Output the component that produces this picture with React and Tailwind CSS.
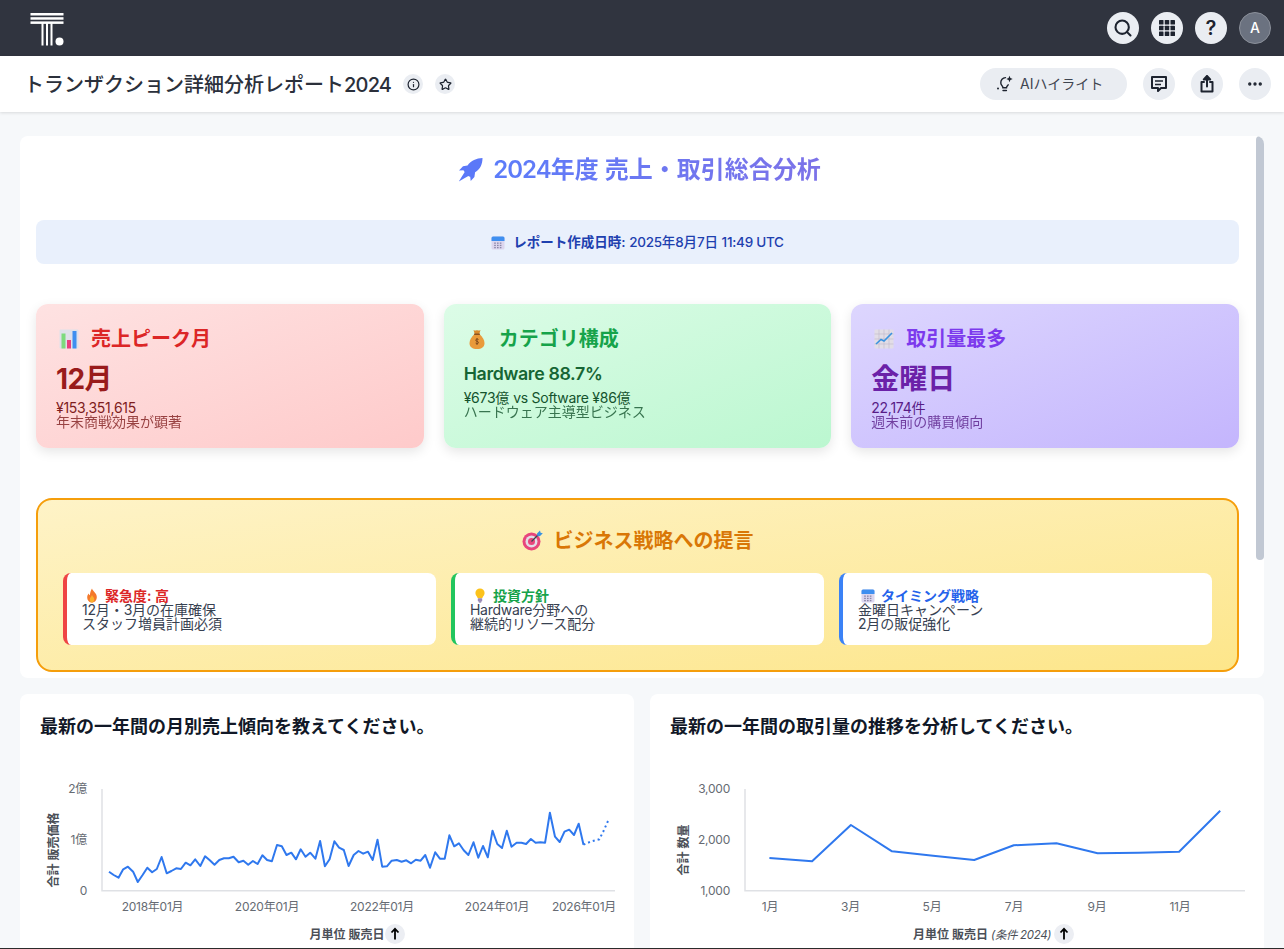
import React from "react";
import { Search, Info, Star, Ellipsis } from "lucide-react";

const L = [[225,305],[237,315],[249,323],[261,298],[273,290],[286,305],[298,336],[310,315],[322,293],[334,307],[346,297],[358,261],[371,310],[383,303],[395,295],[407,297],[419,278],[431,286],[443,268],[456,288],[468,259],[480,271],[492,284],[504,270],[516,265],[528,265],[540,260],[553,277],[565,272],[577,284],[589,273],[601,282],[613,256],[625,270],[637,274],[650,225],[662,229],[674,255],[686,248],[698,268],[710,238],[722,260],[734,248],[747,266],[759,213],[771,289],[783,268],[795,214],[807,233],[819,240],[831,288],[844,255],[856,243],[868,251],[880,245],[892,270],[904,209],[916,290],[928,289],[940,272],[953,270],[965,275],[977,271],[989,280],[1001,269],[1013,272],[1025,255],[1037,293],[1050,247],[1062,266],[1074,266],[1086,196],[1098,229],[1110,220],[1122,241],[1134,255],[1147,217],[1159,263],[1171,228],[1183,262],[1195,182],[1207,222],[1219,234],[1231,182],[1243,230],[1256,218],[1268,218],[1280,222],[1292,207],[1304,218],[1316,217],[1328,218],[1340,128],[1353,200],[1365,216],[1377,185],[1389,179],[1401,195],[1413,161],[1425,224]];
const LD = [[1425,224],[1445,214],[1465,208],[1475,185],[1487,153]];
const R = [[302,264],[410,274],[508,165],[612,244],[716,257],[820,270],[920,226],[1028,220],[1132,250],[1236,248],[1338,245],[1442,122]];
const pts = (a) => a.map(([x, y]) => `${(x / 2.529).toFixed(1)},${(y / 3).toFixed(1)}`).join(" ");

// Latin runs are set slightly tighter than the CJK runs around them.
const Tx = ({ children, wide = false }) =>
  String(children)
    .split(/([\x21-\x7e¥]+(?: [\x21-\x7e¥]+)*)/)
    .map((run, i) =>
      i % 2 ? (
        <span key={i} className={wide ? "tracking-[-0.04em]" : "tracking-[-0.02em]"}>{run}</span>
      ) : (
        run
      )
    );

const IconBtn = ({ children, cls = "" }) => (
  <div className={`w-8 h-8 rounded-full bg-[#eaedf2] flex items-center justify-center text-[#1d232f] ${cls}`}>{children}</div>
);

const Logo = () => (
  <svg width="34" height="34" viewBox="0 0 34 34" fill="#fff" className="mt-[3px]">
    <rect x="0.5" y="0" width="33" height="2.5" />
    <rect x="0.5" y="4.2" width="33" height="2.5" />
    <rect x="0.5" y="8.4" width="33" height="2.5" />
    <rect x="11.5" y="10" width="2" height="22.500" />
    <rect x="16" y="10" width="2" height="22.500" />
    <rect x="20.5" y="10" width="2" height="22.500" />
    <circle cx="29.5" cy="28.500" r="4" />
  </svg>
);

const GridIcon = () => (
  <svg width="16" height="16" viewBox="0 0 16 16" fill="#1d232f">
    {[0, 5.75, 11.5].map((y) => [0, 5.75, 11.5].map((x) => <rect key={x + "-" + y} x={x} y={y} width="4.500" height="4.500" rx=".6" />))}
  </svg>
);

const AiIcon = () => (
  <svg width="18" height="18" viewBox="0 0 18 18" fill="none" stroke="#1d232f" strokeWidth="1.4" strokeLinecap="round">
    <path d="M9.500 2.600A5 5 0 0 0 4.800 8c0 1.600 1.200 2.500 1.800 3.600.2.400.3.800.3 1.200h3.600c0-1.300 1-2 1.700-3" />
    <path d="M7 15.500h3.400" />
    <path d="M13.500 0.800l.9 2.300 2.300.9-2.300.9-.9 2.300-.9-2.300-2.300-.9 2.300-.9z" fill="#1d232f" stroke="none" />
    <circle cx="2" cy="13.500" r="1" fill="#1d232f" stroke="none" />
  </svg>
);

const CommentIcon = () => (
  <svg width="18" height="18" viewBox="0 0 18 18" fill="none" stroke="#1d232f" strokeWidth="2" strokeLinejoin="round">
    <path d="M2 2h14v11h-5l-3 3v-3H2z" />
    <path d="M5 6h8M5 9.500h6" strokeWidth="1.700" />
  </svg>
);

const ShareIcon = () => (
  <svg width="18" height="18" viewBox="0 0 18 18" fill="none" stroke="#1d232f" strokeWidth="2" strokeLinecap="round" strokeLinejoin="round">
    <path d="M6 7H3.500v9.500h11V7H12" />
    <path d="M9 11.500V1.500" />
    <path d="M9 1L5.800 4.500h6.400z" fill="#1d232f" />
  </svg>
);

const Rocket = () => (
  <svg width="25" height="24" viewBox="0 0 25 24" fill="#5b78f8">
    <path d="M24.500 0C18.500.2 13 2.500 9.500 7.500L5 8.300 1 12.500l4.500-.3c.3.800.7 1.400 1.200 1.900L0.800 23.500l9.500-5.600c.6.400 1.200.7 1.900.9l.5 4.200 3.700-4 .7-4.700C22.500 11 24.500 6 24.500 0z" />
  </svg>
);

const Calendar = ({ s = 14 }) => (
  <svg width={s} height={s} viewBox="0 0 14 14">
    <rect x="0.500" y="0.500" width="13" height="13" rx="1.500" fill="#dcd6ee" />
    <path d="M0.500 5V2a1.500 1.500 0 0 1 1.500-1.500h10A1.500 1.500 0 0 1 13.500 2v3z" fill="#3f8ff0" />
    {[3.2, 6, 8.800].map((x) => [6.5, 8.8, 11].map((y) => <rect key={x + "-" + y} x={x} y={y} width="1.600" height="1.300" fill="#8b86a8" />))}
  </svg>
);

const BarChart = () => (
  <svg width="20" height="20" viewBox="0 0 20 20">
    <rect x="0.500" y="0.500" width="19" height="19" rx="1" fill="#dfe1ea" />
    <rect x="2.500" y="4.500" width="4" height="15" fill="#7ddb7e" />
    <rect x="8" y="11" width="4" height="8.500" fill="#ea3f7e" />
    <rect x="13.500" y="2" width="4" height="17.500" fill="#3f8ff0" />
  </svg>
);

const MoneyBag = () => (
  <svg width="20" height="20" viewBox="0 0 20 20">
    <path d="M7.500 5C4.500 8 2.500 11 2.500 14c0 4 3 6 7.500 6s7.500-2 7.500-6c0-3-2-6-5-9z" fill="#e99a3a" />
    <path d="M6.500 1c1.500.8 2.500.8 3.500 0 1 .8 2 .8 3.500 0L12.300 5H7.700z" fill="#d98a2c" />
    <rect x="7" y="4.500" width="6" height="1.400" rx=".7" fill="#8a5220" />
    <path d="M11.500 10.500c-.4-.6-2.800-.8-2.800.7 0 1.500 2.800.8 2.800 2.300 0 1.500-2.400 1.300-2.900.6M10 9v7" fill="none" stroke="#7a4518" strokeWidth=".9" />
  </svg>
);

const LineUp = () => (
  <svg width="20" height="20" viewBox="0 0 20 20">
    <rect x="0.500" y="0.500" width="19" height="19" rx="1" fill="#e2dde6" />
    <path d="M5 .5v19M10 .5v19M15 .5v19M.5 5h19M.5 10h19M.5 15h19" stroke="#c3bccd" strokeWidth=".7" />
    <path d="M2 15l5-4.500 3 1.500 8-8" fill="none" stroke="#3a93e0" strokeWidth="1.600" />
  </svg>
);

const Target = () => (
  <svg width="21" height="21" viewBox="0 0 21 21">
    <circle cx="9.500" cy="11.500" r="9" fill="#e8467c" />
    <circle cx="9.500" cy="11.500" r="6" fill="#e3dde6" />
    <circle cx="9.500" cy="11.500" r="3.500" fill="#e8467c" />
    <path d="M9.500 11.500L17 4" stroke="#37474f" strokeWidth="1.300" />
    <path d="M15 3.500l3-3 .6 2.200 2.200.6-3 3-2.400-.4z" fill="#3a93e0" />
  </svg>
);

const Fire = () => (
  <svg width="14" height="15" viewBox="0 0 14 14">
    <path d="M7 0c.5 2.500 4.800 4.500 4.800 8.500C11.800 11.800 9.700 14 7 14S2.200 11.800 2.200 8.700c0-1.700.8-3 1.600-3.800.1 1 .5 1.600 1.100 1.900C5 4.500 5.800 2 7 0z" fill="#f4792b" />
    <path d="M7 6.500c.4 1.300 2.300 2.300 2.300 4.500 0 1.500-1 3-2.300 3s-2.300-1.300-2.300-2.800c0-1.900 1.700-2.800 2.300-4.700z" fill="#fbb02d" />
  </svg>
);

const Bulb = () => (
  <svg width="14" height="15" viewBox="0 0 14 14">
    <path d="M7 0a4.600 4.600 0 0 0-4.600 4.600c0 2.200 1.700 3.200 2.300 5.200h4.600c.6-2 2.300-3 2.300-5.200A4.600 4.600 0 0 0 7 0z" fill="#fcc21b" />
    <rect x="4.800" y="9.800" width="4.400" height="3.200" rx=".8" fill="#9b8bb8" />
    <rect x="5.800" y="13" width="2.400" height="1" fill="#6f6090" />
  </svg>
);

const Kpi = ({ bg, icon, title, tc, value, vc, vcls, l1, l2, sc }) => (
  <div className={`h-36 rounded-xl p-5 shadow-[0_4px_12px_rgba(0,0,0,0.1)] ${bg}`}>
    <div className={`flex items-center gap-[12px] h-[30px] pl-[3px] text-[20px] leading-[30px] font-semibold ${tc}`}>
      {icon}
      <span>{title}</span>
    </div>
    <div className={`mt-[3px] ${vcls} ${vc}`}><Tx>{value}</Tx></div>
    <div className={`text-sm leading-[14px] ${sc}`}>
      <div><Tx>{l1}</Tx></div>
      <div className="opacity-80">{l2}</div>
    </div>
  </div>
);

const Tip = ({ border, icon, title, tc, l1, l2 }) => (
  <div className={`h-[72px] bg-white rounded-lg border-l-4 p-[15px] text-sm leading-[14px] text-[#374151] ${border}`}>
    <div className={`flex items-center gap-[6px] pl-[3px] h-[15px] font-semibold ${tc}`}>
      {icon}
      <span>{title}</span>
    </div>
    <div><Tx>{l1}</Tx></div>
    <div><Tx>{l2}</Tx></div>
  </div>
);

const axis = { fill: "#666b73", fontSize: 12, letterSpacing: "-0.02em", dominantBaseline: "central" };
const bold = { fill: "#4b4f57", fontSize: 12, fontWeight: 600, dominantBaseline: "central" };

const SortBadge = ({ x }) => (
  <g>
    <circle cx={x} cy="164" r="10" fill="#eceef3" />
    <path d={`M${x} 169.500V159M${x - 3.500} 162.500L${x} 158.800L${x + 3.500} 162.500`} fill="none" stroke="#000" strokeWidth="1.800" />
  </g>
);

const ChartLeft = () => (
  <svg width="614" height="179" className="block">
    <path d="M82 19V120.700H595" fill="none" stroke="#dfe1e5" strokeWidth="1.500" />
    <text x="67" y="18.500" textAnchor="end" {...axis}>2億</text>
    <text x="67" y="69.500" textAnchor="end" {...axis}>1億</text>
    <text x="67" y="120.200" textAnchor="end" {...axis}>0</text>
    {[["2018年01月", 132.5], ["2020年01月", 247], ["2022年01月", 362], ["2024年01月", 477], ["2026年01月", 564]].map(([t, x]) => (
      <text key={t} x={x} y="136.500" textAnchor="middle" {...axis}>{t}</text>
    ))}
    <text transform="translate(33.500 80) rotate(-90)" textAnchor="middle" {...bold}>合計 販売価格</text>
    <polyline points={pts(L)} fill="none" stroke="#2f78ee" strokeWidth="2" strokeLinejoin="round" />
    <polyline points={pts(LD)} fill="none" stroke="#2f78ee" strokeWidth="2" strokeDasharray="2 3" />
    <text x="327" y="164.500" textAnchor="middle" {...bold}>月単位 販売日</text>
    <SortBadge x={375} />
  </svg>
);

const ChartRight = () => (
  <svg width="614" height="179" className="block">
    <path d="M95 19V120.700H595" fill="none" stroke="#dfe1e5" strokeWidth="1.500" />
    <text x="80" y="18.500" textAnchor="end" {...axis}>3,000</text>
    <text x="80" y="69.500" textAnchor="end" {...axis}>2,000</text>
    <text x="80" y="120.200" textAnchor="end" {...axis}>1,000</text>
    {[["1月", 120], ["3月", 200.5], ["5月", 282], ["7月", 364], ["9月", 447], ["11月", 530]].map(([t, x]) => (
      <text key={t} x={x} y="136.500" textAnchor="middle" {...axis}>{t}</text>
    ))}
    <text transform="translate(33.500 80) rotate(-90)" textAnchor="middle" {...bold}>合計 数量</text>
    <polyline points={pts(R)} fill="none" stroke="#2f78ee" strokeWidth="2" strokeLinejoin="round" />
    <text x="263" y="164.500" {...bold}>月単位 販売日 <tspan fontStyle="italic" fontWeight="400" fontSize="11.5" letterSpacing="-0.03em">(条件 2024)</tspan></text>
    <SortBadge x={414} />
  </svg>
);

const ChartCard = ({ title, children }) => (
  <div className="bg-white rounded-t-lg h-[260px] overflow-hidden">
    <div className="h-[76px] pl-5 pt-[19px] text-[18px] leading-[28px] font-semibold text-[#111827]">{title}</div>
    {children}
  </div>
);

export default function App() {
  return (
    <div className="h-[949px] overflow-hidden flex flex-col bg-[#f6f8fa] border-b border-[#2b2b2b] font-[Inter,'Noto_Sans_CJK_JP',sans-serif]">
      <header className="h-14 shrink-0 bg-[#30343f] flex items-center justify-between pl-[30px] pr-[13px]">
        <Logo />
        <div className="flex items-center gap-3">
          <IconBtn><Search size={20} strokeWidth={2.5} /></IconBtn>
          <IconBtn><GridIcon /></IconBtn>
          <IconBtn><span className="text-xl font-semibold leading-none">?</span></IconBtn>
          <div className="w-8 h-8 rounded-full bg-[#6b7280] border border-[#8b909a] flex items-center justify-center text-white text-sm font-medium">A</div>
        </div>
      </header>

      <div className="h-14 shrink-0 bg-white shadow-[0_1px_3px_rgba(0,0,0,0.12)] flex items-center justify-between pl-[24px] pr-[13px] relative">
        <div className="flex items-center">
          <h1 className="text-xl font-medium leading-[30px] pt-[1px] text-[#2b303b]"><Tx wide>トランザクション詳細分析レポート2024</Tx></h1>
          <div className="ml-3 w-5 h-5 rounded-full bg-[#eaedf2] flex items-center justify-center text-[#1d232f]"><Info size={13} strokeWidth={2.2} /></div>
          <div className="ml-3 w-5 h-5 rounded-full bg-[#eaedf2] flex items-center justify-center text-[#1d232f]"><Star size={13} strokeWidth={2.2} /></div>
        </div>
        <div className="flex items-center gap-4">
          <div className="w-[147px] h-8 rounded-full bg-[#eaedf2] flex items-center pl-4 gap-[6px] text-sm text-[#3f4550]">
            <AiIcon />
            <span>AIハイライト</span>
          </div>
          <IconBtn><CommentIcon /></IconBtn>
          <IconBtn><ShareIcon /></IconBtn>
          <IconBtn><Ellipsis size={18} strokeWidth={2.5} /></IconBtn>
        </div>
      </div>

      <main className="flex-1 pl-5 pr-5 pt-6 flex flex-col gap-4 min-h-0">
        <section className="h-[542px] shrink-0 bg-white rounded-lg overflow-hidden relative pl-4 pr-[25px]">
          <div className="h-[84px] pt-[16px] pl-[4px] flex items-start justify-center gap-[10px] text-2xl leading-[36px] font-semibold">
            <span className="pt-[6px]"><Rocket /></span>
            <span className="bg-linear-to-r from-[#5b7cfa] to-[#7c72e8] bg-clip-text text-transparent"><Tx wide>2024年度 売上・取引総合分析</Tx></span>
          </div>
          <div className="h-11 pt-[1px] rounded-lg bg-[#e9f0fc] flex items-center justify-center gap-[8px] text-[13.5px] text-[#1e40af] font-medium">
            <Calendar />
            <span><b className="font-semibold">レポート作成日時:</b> <Tx>2025年8月7日 11:49 UTC</Tx></span>
          </div>
          <div className="grid grid-cols-3 gap-5 mt-10">
            <Kpi bg="bg-linear-to-br from-[#fee2e2] to-[#fecaca]" icon={<BarChart />} title="売上ピーク月" tc="text-[#dc2626]" value="12月" vc="text-[#991b1b]" vcls="text-[28px] leading-[44px] font-bold" l1="¥153,351,615" l2="年末商戦効果が顕著" sc="text-[#7f1d1d]" />
            <Kpi bg="bg-linear-to-br from-[#dcfce7] to-[#bbf7d0]" icon={<MoneyBag />} title="カテゴリ構成" tc="text-[#16a34a]" value="Hardware 88.7%" vc="text-[#166534]" vcls="text-[17.8px] leading-[34px] font-semibold" l1="¥673億 vs Software ¥86億" l2="ハードウェア主導型ビジネス" sc="text-[#14532d]" />
            <Kpi bg="bg-linear-to-br from-[#ddd6fe] to-[#c4b5fd]" icon={<LineUp />} title="取引量最多" tc="text-[#7c3aed]" value="金曜日" vc="text-[#6b21a8]" vcls="text-[28px] leading-[44px] font-bold" l1="22,174件" l2="週末前の購買傾向" sc="text-[#581c87]" />
          </div>
          <div className="mt-[50px] h-[174px] rounded-2xl border-2 border-[#f59e0b] bg-linear-to-br from-[#fef3c7] to-[#fde68a] px-[25px] pt-[25px]">
            <div className="h-[30px] pt-[1px] flex items-center justify-center gap-[11px] text-[20px] font-semibold text-[#d97706]">
              <Target />
              <span>ビジネス戦略への提言</span>
            </div>
            <div className="grid grid-cols-3 gap-[15px] mt-[18px]">
              <Tip border="border-[#ef4444]" icon={<Fire />} title="緊急度: 高" tc="text-[#dc2626]" l1="12月・3月の在庫確保" l2="スタッフ増員計画必須" />
              <Tip border="border-[#22c55e]" icon={<Bulb />} title="投資方針" tc="text-[#16a34a]" l1="Hardware分野への" l2="継続的リソース配分" />
              <Tip border="border-[#3b82f6]" icon={<Calendar />} title="タイミング戦略" tc="text-[#2563eb]" l1="金曜日キャンペーン" l2="2月の販促強化" />
            </div>
          </div>
          <div className="absolute top-0 right-0 w-2 h-[424px] rounded-full bg-[#c1c8d3]" />
        </section>

        <div className="grid grid-cols-2 gap-4">
          <ChartCard title="最新の一年間の月別売上傾向を教えてください。"><ChartLeft /></ChartCard>
          <ChartCard title="最新の一年間の取引量の推移を分析してください。"><ChartRight /></ChartCard>
        </div>
      </main>
    </div>
  );
}
